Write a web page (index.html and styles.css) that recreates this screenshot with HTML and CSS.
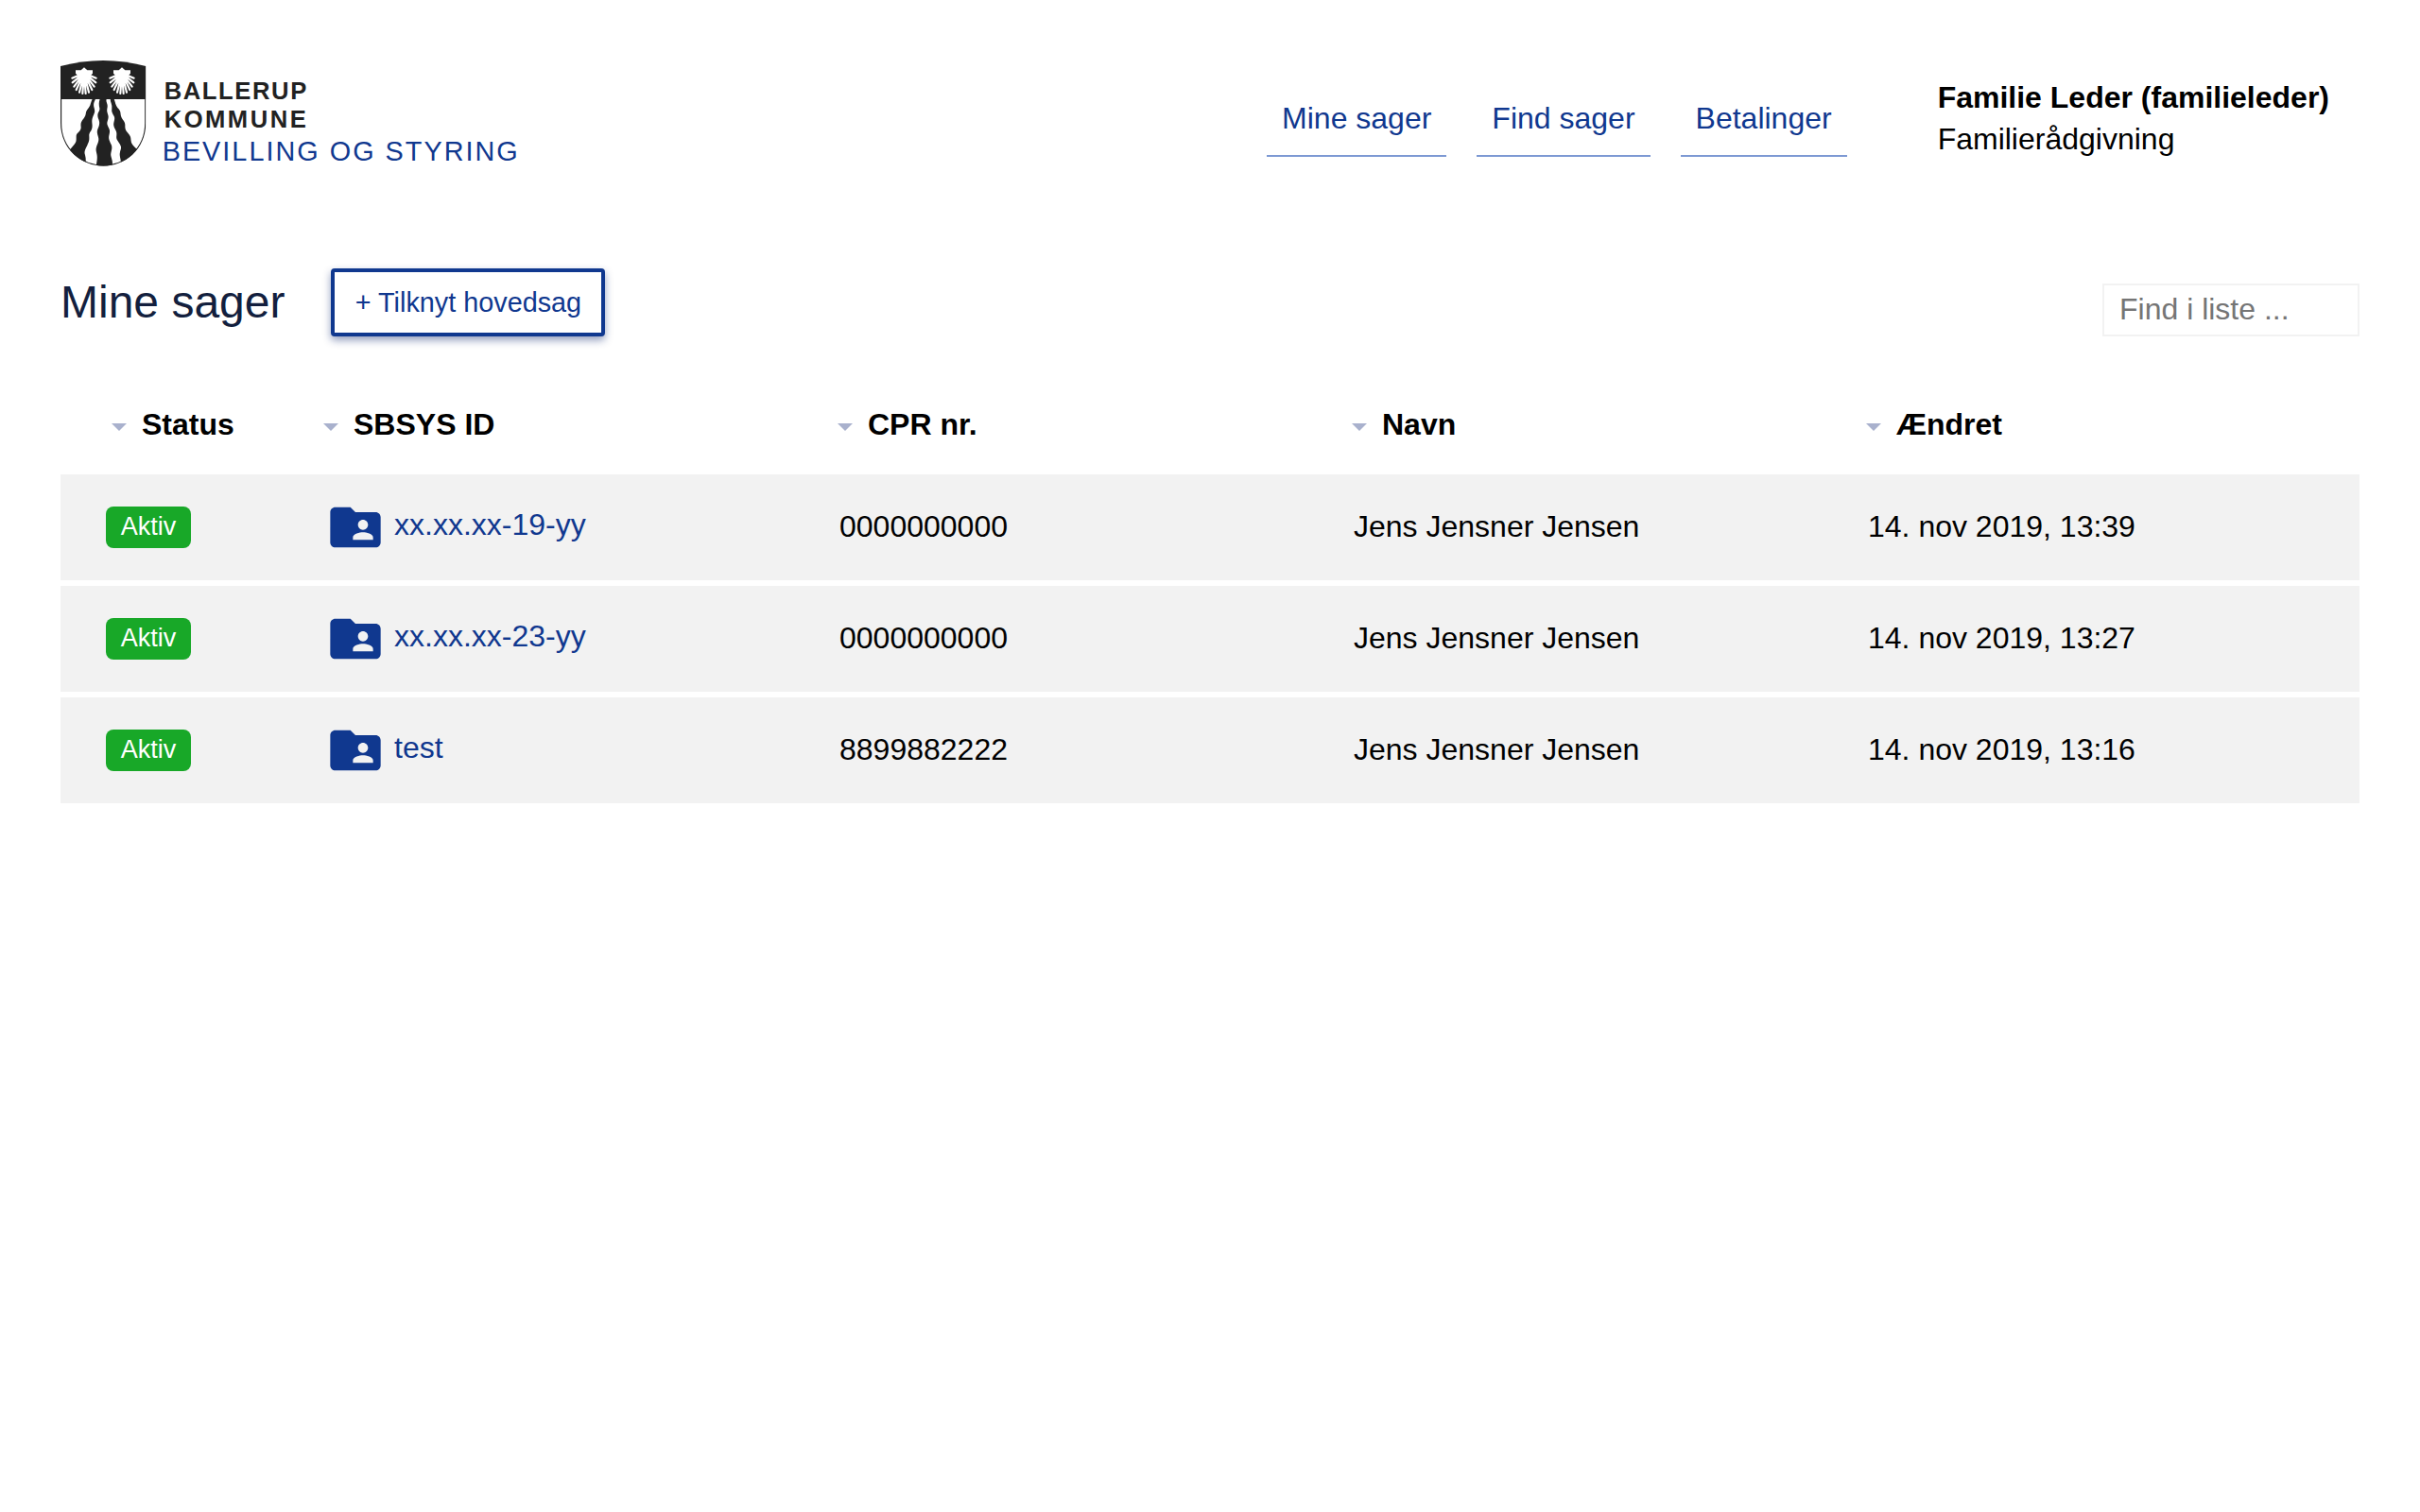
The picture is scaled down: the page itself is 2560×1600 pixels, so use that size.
FILE: index.html
```html
<!DOCTYPE html>
<html lang="da">
<head>
<meta charset="utf-8">
<title>Bevilling og styring</title>
<link rel="stylesheet" href="styles.css">
</head>
<body>
<svg class="defs" width="0" height="0" aria-hidden="true">
  <symbol id="folder" viewBox="0 0 24 24"><path d="M20 6h-8l-2-2H4c-1.1 0-1.99.9-1.99 2L2 18c0 1.1.9 2 2 2h16c1.100 0 2-.9 2-2V8c0-1.100-.9-2-2-2zm-5 3c1.100 0 2 .9 2 2s-.9 2-2 2-2-.9-2-2 .9-2 2-2zm4 8h-8v-1c0-1.330 2.670-2 4-2s4 .67 4 2v1z"/></symbol>
  <symbol id="sort" viewBox="0 0 16 8"><path d="M0 0h16L8 8z"/></symbol>
</svg>
<header class="header">
  <a class="brand">
    <svg class="crest" viewBox="42 42 272 336">
      <defs>
        <clipPath id="shield"><path d="M42 60Q178 24 313 60V240C313 325 245 377 178 377S42 325 42 240Z"/></clipPath>
        <g id="shell">
          <path d="M-27-35H-10L0-44 10-35H27V-25L20-18 8-4H-8L-20-18-27-25Z" fill="#fff"/>
          <path d="M0-26-38-10M0-26-37 4M0-26-32 17M0-26-25 27M0-26-15 35M0-26-5 39M0-26 5 39M0-26 15 35M0-26 25 27M0-26 32 17M0-26 37 4M0-26 38-10" fill="none" stroke="#fff" stroke-width="6.500" stroke-linecap="round"/>
        </g>
      </defs>
      <g clip-path="url(#shield)">
        <path fill="#fff" d="M42 42h272v336H42z"/>
        <path fill="#222" d="M42 42h272v123H42z"/>
        <g fill="#222">
          <path d="M143 164C138 174 138 182 133 190S123 201 122 212 109 231 107 241 110 256 104 264 92 274 92 284 93 300 86 308L68 330 90 378H120C122 366 124 355 120 342S122 322 127 311 134 297 133 283 139 269 142 257 139 237 144 223 153 208 149 193 149 174 153 164Z"/>
          <path d="M167 164C163 175 164 184 166 193S160 206 160 217 168 233 165 246 157 262 159 274 166 290 161 303 153 321 156 334 160 351 155 378H206C209 362 204 355 202 344S209 322 203 309 193 290 197 276 195 258 191 247 197 227 193 215 189 201 191 190 185 174 188 164Z"/>
          <path d="M200 164C200 174 207 183 205 194S207 209 212 219 209 237 211 249 222 264 220 279 223 294 230 307 234 321 231 333 233 350 236 378H265L290 330C279 318 267 310 266 298S265 282 256 272 247 257 247 246 239 231 235 221 235 205 226 195 218 181 212 164Z"/>
        </g>
        <path d="M43 60V240C43 325 111 376 178 376S312 325 312 240V60" fill="none" stroke="#222" stroke-width="5"/>
      </g>
      <use href="#shell" x="117" y="108"/><use href="#shell" x="237" y="108"/>
    </svg>
    <span class="brand-text">
      <span class="brand-ballerup">BALLERUP</span>
      <span class="brand-kommune">KOMMUNE</span>
      <span class="brand-sub">BEVILLING OG STYRING</span>
    </span>
  </a>
  <nav class="nav"><a>Mine sager</a><a>Find sager</a><a>Betalinger</a></nav>
  <div class="user"><b>Familie Leder (familieleder)</b><span>Familierådgivning</span></div>
</header>
<main class="main">
  <div class="toolbar">
    <h1>Mine sager</h1>
    <button class="btn">+ Tilknyt hovedsag</button>
    <input class="search" type="search" placeholder="Find i liste ...">
  </div>
  <div class="row head">
    <div><svg><use href="#sort"/></svg>Status</div>
    <div><svg><use href="#sort"/></svg>SBSYS ID</div>
    <div><svg><use href="#sort"/></svg>CPR nr.</div>
    <div><svg><use href="#sort"/></svg>Navn</div>
    <div><svg><use href="#sort"/></svg>Ændret</div>
  </div>
  <div class="row item">
    <div><span class="badge">Aktiv</span></div>
    <a class="case"><svg><use href="#folder"/></svg><span>xx.xx.xx-19-yy</span></a>
    <div class="cell">0000000000</div><div class="cell">Jens Jensner Jensen</div><div class="cell">14. nov 2019, 13:39</div>
  </div>
  <div class="row item">
    <div><span class="badge">Aktiv</span></div>
    <a class="case"><svg><use href="#folder"/></svg><span>xx.xx.xx-23-yy</span></a>
    <div class="cell">0000000000</div><div class="cell">Jens Jensner Jensen</div><div class="cell">14. nov 2019, 13:27</div>
  </div>
  <div class="row item">
    <div><span class="badge">Aktiv</span></div>
    <a class="case"><svg><use href="#folder"/></svg><span>test</span></a>
    <div class="cell">8899882222</div><div class="cell">Jens Jensner Jensen</div><div class="cell">14. nov 2019, 13:16</div>
  </div>
</main>
</body>
</html>
```
FILE: styles.css
```css
* { box-sizing: border-box; }
body { margin: 0; background: #fff; color: #000; font: 32px/44px "Liberation Sans", Arial, sans-serif; }
.defs { display: block; height: 0; }
.header { display: flex; align-items: flex-start; padding: 64px 64px 0; height: 284px; }
.brand { display: flex; gap: 18px; margin-right: auto; }
.crest { width: 90.670px; height: 112px; }
.brand-text { display: flex; flex-direction: column; white-space: nowrap; padding-top: 17px; }
.brand-ballerup, .brand-kommune { color: #222; font-weight: bold; font-size: 25.600px; line-height: 30px; padding-left: 1px; }
.brand-ballerup { letter-spacing: 1.600px; }
.brand-kommune { letter-spacing: 2.500px; }
.brand-sub { color: #10388f; font-size: 28.800px; line-height: 38px; letter-spacing: 2.020px; margin-left: -1px; }
.nav { display: flex; gap: 32px; padding-top: 23px; }
.nav a { padding: 16px 16px 0; height: 79px; line-height: 44px; color: #10388f; border-bottom: 2px solid #7d99d3; }
.user { display: flex; flex-direction: column; padding: 17px 32px 0 96px; white-space: nowrap; }
.main { padding: 0 64px; }
.toolbar { display: flex; align-items: flex-start; height: 72px; }
h1 { margin: 0 49px 0 0; color: #131f3e; font-size: 48px; font-weight: normal; line-height: 72px; }
.btn { width: 290px; height: 72px; padding: 0 0 1px; border: 4px solid #10388f; border-radius: 4px; background: #fff; color: #10388f; font: 28.800px/60px "Liberation Sans", Arial, sans-serif; white-space: nowrap; box-shadow: 0 4px 8px rgba(16,40,110,.45); }
.search { margin: 16px 0 0 auto; width: 272px; height: 56px; padding: 0 14px 2px 16px; border: 2px solid #f2f2f2; background: #fff; font: 32px "Liberation Sans", Arial, sans-serif; appearance: none; }
.search::placeholder { color: #757575; opacity: 1; }
.row { display: grid; grid-template-columns: 232px 544px 544px 544px 1fr; align-items: center; padding-left: 48px; }
.head { height: 146px; padding-top: 40px; font-weight: bold; align-items: start; }
.head > div { display: flex; align-items: center; gap: 16px; padding: 31px 0 0 6px; margin-left: -8px; }
.head > div:first-child { margin-left: 0; }
.head svg { width: 16px; height: 8px; margin-top: 6px; fill: #a9b1cd; }
.item { height: 112px; margin-bottom: 6px; background: #f2f2f2; }
.cell { padding-bottom: 2px; }
.badge { display: block; width: 90px; height: 44px; border-radius: 8px; background: #18a828; color: #fff; font-size: 27px; line-height: 42px; text-align: center; }
.case { display: flex; align-items: center; color: #10388f; }
.case svg { width: 64px; height: 64px; margin-right: 9px; fill: #10388f; }
.case span { margin-top: -6px; }
```
